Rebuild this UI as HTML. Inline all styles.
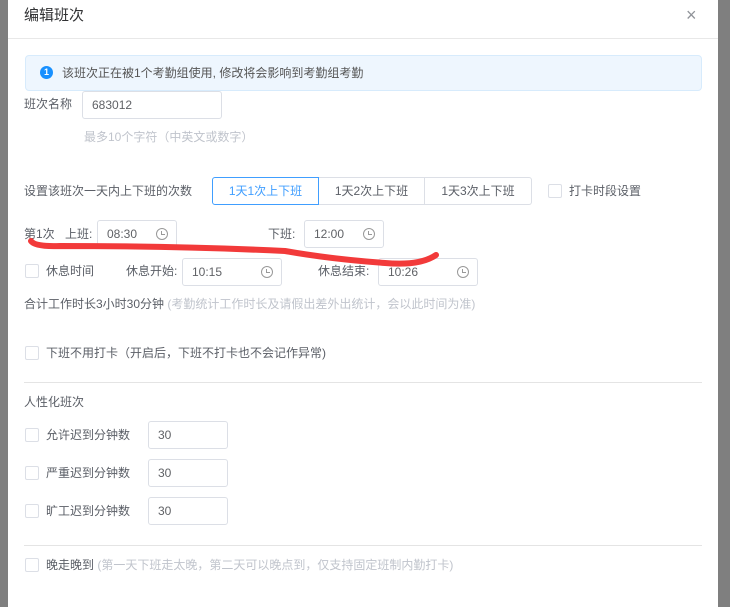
<!DOCTYPE html>
<html><head><meta charset="utf-8"><style>
*{box-sizing:border-box;margin:0;padding:0}
body{width:730px;height:607px;background:#7f7f7f;font-family:"Liberation Sans","Noto Sans CJK SC",sans-serif;font-size:12px;color:#5a5e66;position:relative;overflow:hidden}
.modal{position:absolute;left:8px;top:0;width:710px;height:607px;background:#fff}
.a{position:absolute;white-space:nowrap;line-height:14px}
.hd{position:absolute;left:0;top:0;width:710px;height:39px;border-bottom:1px solid #e8e8e8}
.inp{position:absolute;border:1px solid #dcdfe6;border-radius:3px;background:#fff;height:28px;line-height:26px;padding-left:9px;color:#606266}
.clk{position:absolute;right:8px;top:7px;width:12px;height:12px;border:1px solid #999;border-radius:50%}
.clk:after{content:"";position:absolute;left:4px;top:2px;width:3px;height:3px;border-left:1px solid #999;border-bottom:1px solid #999}
.cb{position:absolute;width:14px;height:14px;border:1px solid #dcdfe6;border-radius:2px;background:#fff}
.gray{color:#c0c4cc}
.line{position:absolute;left:16px;width:678px;height:1px;background:#e4e4e4}
</style></head><body>
<div class="modal">
<div class="hd"><span class="a" style="left:16px;top:7px;font-size:15px;line-height:18px;color:#303133">编辑班次</span><span class="a" style="left:678px;top:5px;font-size:18px;line-height:20px;color:#909399">×</span></div>
<div class="a" style="left:17px;top:55px;width:677px;height:36px;background:#eef6fe;border:1px solid #d7ebfc;border-radius:4px"></div>
<div class="a" style="left:32px;top:66px;width:13px;height:13px;border-radius:50%;background:#1890ff;color:#fff;font-size:9px;text-align:center;line-height:13px;font-weight:bold">1</div>
<span class="a" style="left:54px;top:66px;color:#555">该班次正在被1个考勤组使用, 修改将会影响到考勤组考勤</span>
<span class="a" style="left:16px;top:97px">班次名称</span>
<div class="inp" style="left:74px;top:91px;width:140px">683012</div>
<span class="a gray" style="left:76px;top:130px">最多10个字符（中英文或数字）</span>
<span class="a" style="left:16px;top:184px">设置该班次一天内上下班的次数</span>
<div class="a" style="left:204px;top:177px;width:107px;height:28px;border:1px solid #409eff;border-radius:3px 0 0 3px;color:#409eff;text-align:center;line-height:26px">1天1次上下班</div>
<div class="a" style="left:311px;top:177px;width:106px;height:28px;border:1px solid #dcdfe6;border-left:none;text-align:center;line-height:26px">1天2次上下班</div>
<div class="a" style="left:417px;top:177px;width:107px;height:28px;border:1px solid #dcdfe6;border-left:none;border-radius:0 3px 3px 0;text-align:center;line-height:26px">1天3次上下班</div>
<div class="cb" style="left:540px;top:184px"></div><span class="a" style="left:561px;top:184px">打卡时段设置</span>
<span class="a" style="left:16px;top:227px">第1次</span><span class="a" style="left:57px;top:227px">上班:</span>
<div class="inp" style="left:89px;top:220px;width:80px">08:30<div class="clk"></div></div>
<span class="a" style="left:260px;top:227px">下班:</span>
<div class="inp" style="left:296px;top:220px;width:80px">12:00<div class="clk"></div></div>
<div class="cb" style="left:17px;top:264px"></div><span class="a" style="left:38px;top:264px">休息时间</span>
<span class="a" style="left:118px;top:264px">休息开始:</span>
<div class="inp" style="left:174px;top:258px;width:100px">10:15<div class="clk"></div></div>
<span class="a" style="left:310px;top:264px">休息结束:</span>
<div class="inp" style="left:370px;top:258px;width:100px">10:26<div class="clk"></div></div>
<span class="a" style="left:16px;top:297px">合计工作时长3小时30分钟 <span class="gray">(考勤统计工作时长及请假出差外出统计，会以此时间为准)</span></span>
<div class="cb" style="left:17px;top:346px"></div><span class="a" style="left:38px;top:346px">下班不用打卡（开启后，下班不打卡也不会记作异常)</span>
<div class="line" style="top:382px"></div>
<span class="a" style="left:16px;top:395px">人性化班次</span>
<div class="cb" style="left:17px;top:428px"></div><span class="a" style="left:38px;top:428px">允许迟到分钟数</span>
<div class="inp" style="left:140px;top:421px;width:80px">30</div>
<div class="cb" style="left:17px;top:466px"></div><span class="a" style="left:38px;top:466px">严重迟到分钟数</span>
<div class="inp" style="left:140px;top:459px;width:80px">30</div>
<div class="cb" style="left:17px;top:504px"></div><span class="a" style="left:38px;top:504px">旷工迟到分钟数</span>
<div class="inp" style="left:140px;top:497px;width:80px">30</div>
<div class="line" style="top:545px"></div>
<div class="cb" style="left:17px;top:558px"></div><span class="a" style="left:38px;top:558px">晚走晚到 <span class="gray">(第一天下班走太晚，第二天可以晚点到，仅支持固定班制内勤打卡)</span></span>
</div>
<svg style="position:absolute;left:0;top:0" width="730" height="607"><path d="M31 241 Q35 247 60 246 Q180 246 285 251 Q330 259 385 263 Q420 266 436 255" stroke="#f23a3a" stroke-width="6" fill="none" stroke-linecap="round"/></svg>
</body></html>
